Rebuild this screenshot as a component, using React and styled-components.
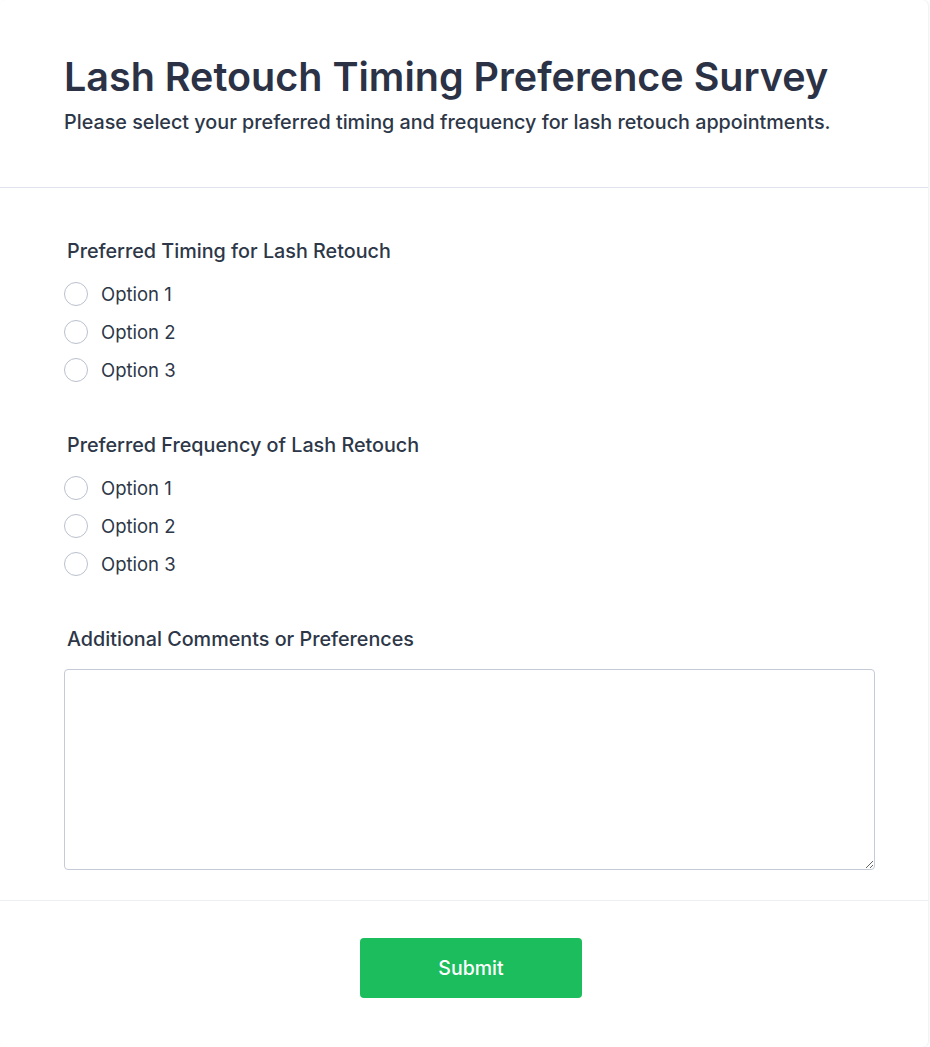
import React, { useState } from 'react';
import styled, { createGlobalStyle } from 'styled-components';

const GlobalStyle = createGlobalStyle`
  * {
    box-sizing: border-box;
  }

  body {
    margin: 0;
    background: #ffffff;
    font-family: Inter, "Noto Sans", sans-serif;
    color: #2d3748;
  }
`;

const Card = styled.div`
  width: 928px;
  min-height: 1047px;
  background: #ffffff;
  border-radius: 6px;
  box-shadow: 1px 0 2px rgba(30, 41, 59, 0.08);
`;

const Header = styled.header`
  padding: 55px 64px 51px;
  border-bottom: 1px solid #dfe3ec;
`;

const Title = styled.h1`
  margin: 0;
  font-size: 39.5px;
  line-height: 44px;
  font-weight: 600;
  color: #2b3245;
`;

const Subtitle = styled.p`
  margin: 9px 0 0;
  font-size: 19.75px;
  line-height: 28px;
  font-weight: 500;
  color: #2d3748;
`;

const Form = styled.form`
  padding: 50px 53px 30px 64px;
  border-bottom: 1px solid #eceff4;
`;

const Group = styled.fieldset`
  margin: 0 0 43px;
  padding: 0;
  border: none;
  min-width: 0;

  &:last-child {
    margin-bottom: 0;
  }
`;

const GroupLabel = styled.legend`
  display: block;
  padding: 0 0 0 3px;
  margin: 0;
  font-size: 19.75px;
  line-height: 27px;
  font-weight: 500;
  color: #2d3748;
`;

const Options = styled.div`
  display: flex;
  flex-direction: column;
  margin-top: 10px;
`;

const OptionRow = styled.label`
  display: flex;
  align-items: center;
  gap: 13px;
  height: 38px;
  font-size: 18.5px;
  color: #2d3748;
  cursor: pointer;
`;

const Radio = styled.input`
  appearance: none;
  margin: 0;
  width: 24px;
  height: 24px;
  border-radius: 50%;
  border: 1.5px solid #bac1cd;
  background: #ffffff;
  cursor: pointer;

  &:checked {
    border: 7px solid #1bbd5d;
  }
`;

const TextArea = styled.textarea`
  display: block;
  width: 100%;
  height: 201px;
  margin-top: 16px;
  padding: 12px;
  border: 1px solid #c4cad6;
  border-radius: 4px;
  font-family: inherit;
  font-size: 16px;
  color: #2d3748;
  resize: vertical;
  outline: none;
`;

const Footer = styled.div`
  display: flex;
  justify-content: center;
  padding: 37px 0 49px 14px;
`;

const SubmitButton = styled.button`
  width: 222px;
  height: 60px;
  border: none;
  border-radius: 4px;
  background: #1bbd5d;
  color: #ffffff;
  font-family: inherit;
  font-size: 19.5px;
  font-weight: 500;
  cursor: pointer;

  &:hover {
    background: #17a852;
  }
`;

const questions = [
  { id: 'timing', label: 'Preferred Timing for Lash Retouch' },
  { id: 'frequency', label: 'Preferred Frequency of Lash Retouch' },
];

const options = ['Option 1', 'Option 2', 'Option 3'];

function App() {
  const [answers, setAnswers] = useState({});
  const [comments, setComments] = useState('');

  return (
    <>
      <GlobalStyle />
      <Card>
        <Header>
          <Title>Lash Retouch Timing Preference Survey</Title>
          <Subtitle>Please select your preferred timing and frequency for lash retouch appointments.</Subtitle>
        </Header>
        <Form onSubmit={e => e.preventDefault()}>
          {questions.map(q => (
            <Group key={q.id}>
              <GroupLabel>{q.label}</GroupLabel>
              <Options>
                {options.map(opt => (
                  <OptionRow key={opt}>
                    <Radio
                      type="radio"
                      name={q.id}
                      checked={answers[q.id] === opt}
                      onChange={() => setAnswers(prev => ({ ...prev, [q.id]: opt }))}
                    />
                    {opt}
                  </OptionRow>
                ))}
              </Options>
            </Group>
          ))}
          <Group>
            <GroupLabel>Additional Comments or Preferences</GroupLabel>
            <TextArea value={comments} onChange={e => setComments(e.target.value)} />
          </Group>
        </Form>
        <Footer>
          <SubmitButton type="button">Submit</SubmitButton>
        </Footer>
      </Card>
    </>
  );
}

export default App;
